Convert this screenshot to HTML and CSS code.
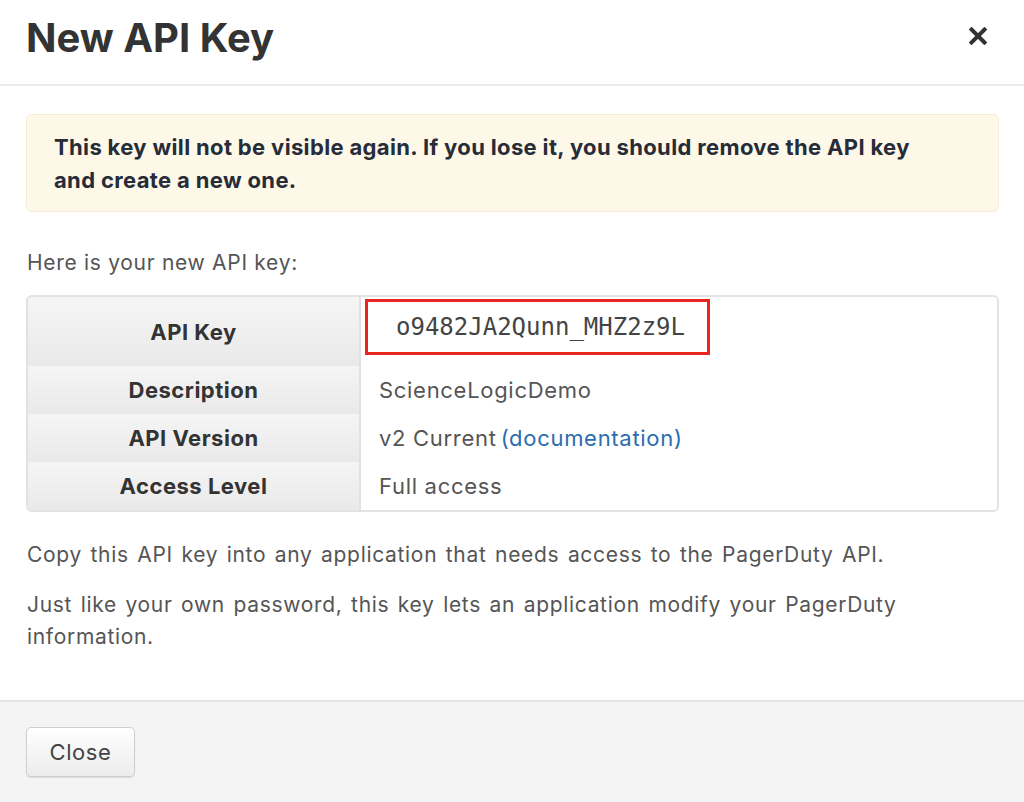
FILE: index.html
```html
<!DOCTYPE html>
<html>
<head>
<meta charset="utf-8">
<link rel="stylesheet" href="styles.css">
</head>
<body>
<div class="modal">
  <div class="header">
    <h1 class="title">New API Key</h1>
    <svg class="close-x" width="18" height="18" viewBox="0 0 18 18"><path d="M2.5 2.5 L15.5 15.5 M15.5 2.5 L2.5 15.5" stroke="#333" stroke-width="4" stroke-linecap="square"/></svg>
  </div>
  <div class="content">
    <div class="warning">This key will not be visible again. If you lose it, you should remove the API key and create a new one.</div>
    <p class="intro">Here is your new API key:</p>
    <div class="keytable">
      <div class="row row-key">
        <div class="label">API Key</div>
        <div class="value"><span class="keybox">o9482JA2Qunn_MHZ2z9L</span></div>
      </div>
      <div class="row">
        <div class="label">Description</div>
        <div class="value">ScienceLogicDemo</div>
      </div>
      <div class="row">
        <div class="label">API Version</div>
        <div class="value">v2 Current <a class="link" href="#">(documentation)</a></div>
      </div>
      <div class="row">
        <div class="label">Access Level</div>
        <div class="value">Full access</div>
      </div>
    </div>
    <p class="para">Copy this API key into any application that needs access to the PagerDuty API.</p>
    <p class="para">Just like your own password, this key lets an application modify your PagerDuty information.</p>
  </div>
  <div class="footer">
    <button class="btn">Close</button>
  </div>
</div>
</body>
</html>
```
FILE: styles.css
```css
html, body {
  margin: 0;
  padding: 0;
  background: #fff;
}
body {
  font-family: Inter, "Liberation Sans", sans-serif;
  color: #555;
}
.modal {
  width: 1024px;
  height: 802px;
  display: flex;
  flex-direction: column;
}
.header {
  height: 86px;
  border-bottom: 2px solid #ececec;
  display: flex;
  align-items: center;
  justify-content: space-between;
  padding: 0 37px 0 26px;
  box-sizing: border-box;
  flex: none;
}
.title {
  margin: 0 0 10px 0;
  font-size: 40px;
  font-weight: 700;
  color: #333;
  letter-spacing: 0;
}
.close-x {
  display: block;
  margin-bottom: 12px;
}
.content {
  flex: 1;
  padding: 28px 25px 0 26px;
}
.warning {
  background: #fef8e8;
  border: 1px solid #f8ecd2;
  border-radius: 6px;
  padding: 16px 60px 14px 27px;
  font-size: 22px;
  line-height: 33px;
  font-weight: 700;
  color: #262c38;
  letter-spacing: 0.35px;
}
.intro {
  margin: 35px 0 16px 1px;
  font-size: 21px;
  line-height: 32px;
  color: #555;
  letter-spacing: 0.7px;
}
.keytable {
  border: 2px solid #e2e2e2;
  border-radius: 6px;
  overflow: hidden;
}
.row {
  display: flex;
  height: 48px;
}
.row-key {
  height: 69px;
}
.label {
  width: 331px;
  flex: none;
  border-right: 2px solid #e2e2e2;
  background: linear-gradient(#f5f5f5, #e9e9e9);
  display: flex;
  align-items: center;
  justify-content: center;
  font-size: 22px;
  font-weight: 700;
  color: #333;
  letter-spacing: 0.5px;
}
.value {
  flex: 1;
  display: flex;
  align-items: center;
  padding-left: 18px;
  font-size: 22px;
  color: #555;
  background: #fff;
  letter-spacing: 0.7px;
}
.row-key .value {
  padding-left: 4px;
  align-items: flex-start;
  padding-top: 2px;
}
.keybox {
  display: block;
  border: 3px solid #e8261f;
  font-family: "DejaVu Sans Mono", "Liberation Mono", monospace;
  font-size: 24px;
  line-height: 50px;
  padding-left: 28px;
  box-sizing: border-box;
  width: 345px;
  height: 56px;
  color: #444;
  letter-spacing: 0;
}
.link {
  color: #2a6db0;
  text-decoration: none;
  margin-left: 4px;
}
.para {
  margin: 27px 0 0 1px;
  font-size: 21px;
  line-height: 32px;
  color: #555;
  padding-right: 40px;
  letter-spacing: 0.68px;
  word-spacing: 2px;
}
.para + .para {
  margin-top: 18px;
}
.footer {
  height: 102px;
  border-top: 2px solid #e4e4e4;
  background: #f4f4f4;
  padding: 25px 26px;
  box-sizing: border-box;
  flex: none;
}
.btn {
  width: 109px;
  height: 50px;
  border: 1px solid #cfcfcf;
  border-radius: 5px;
  background: linear-gradient(#ffffff, #ececec);
  box-shadow: 0 1px 1px rgba(0,0,0,0.12);
  font-family: Inter, "Liberation Sans", sans-serif;
  font-size: 22px;
  letter-spacing: 0.6px;
  color: #444;
  padding: 0;
}
```
